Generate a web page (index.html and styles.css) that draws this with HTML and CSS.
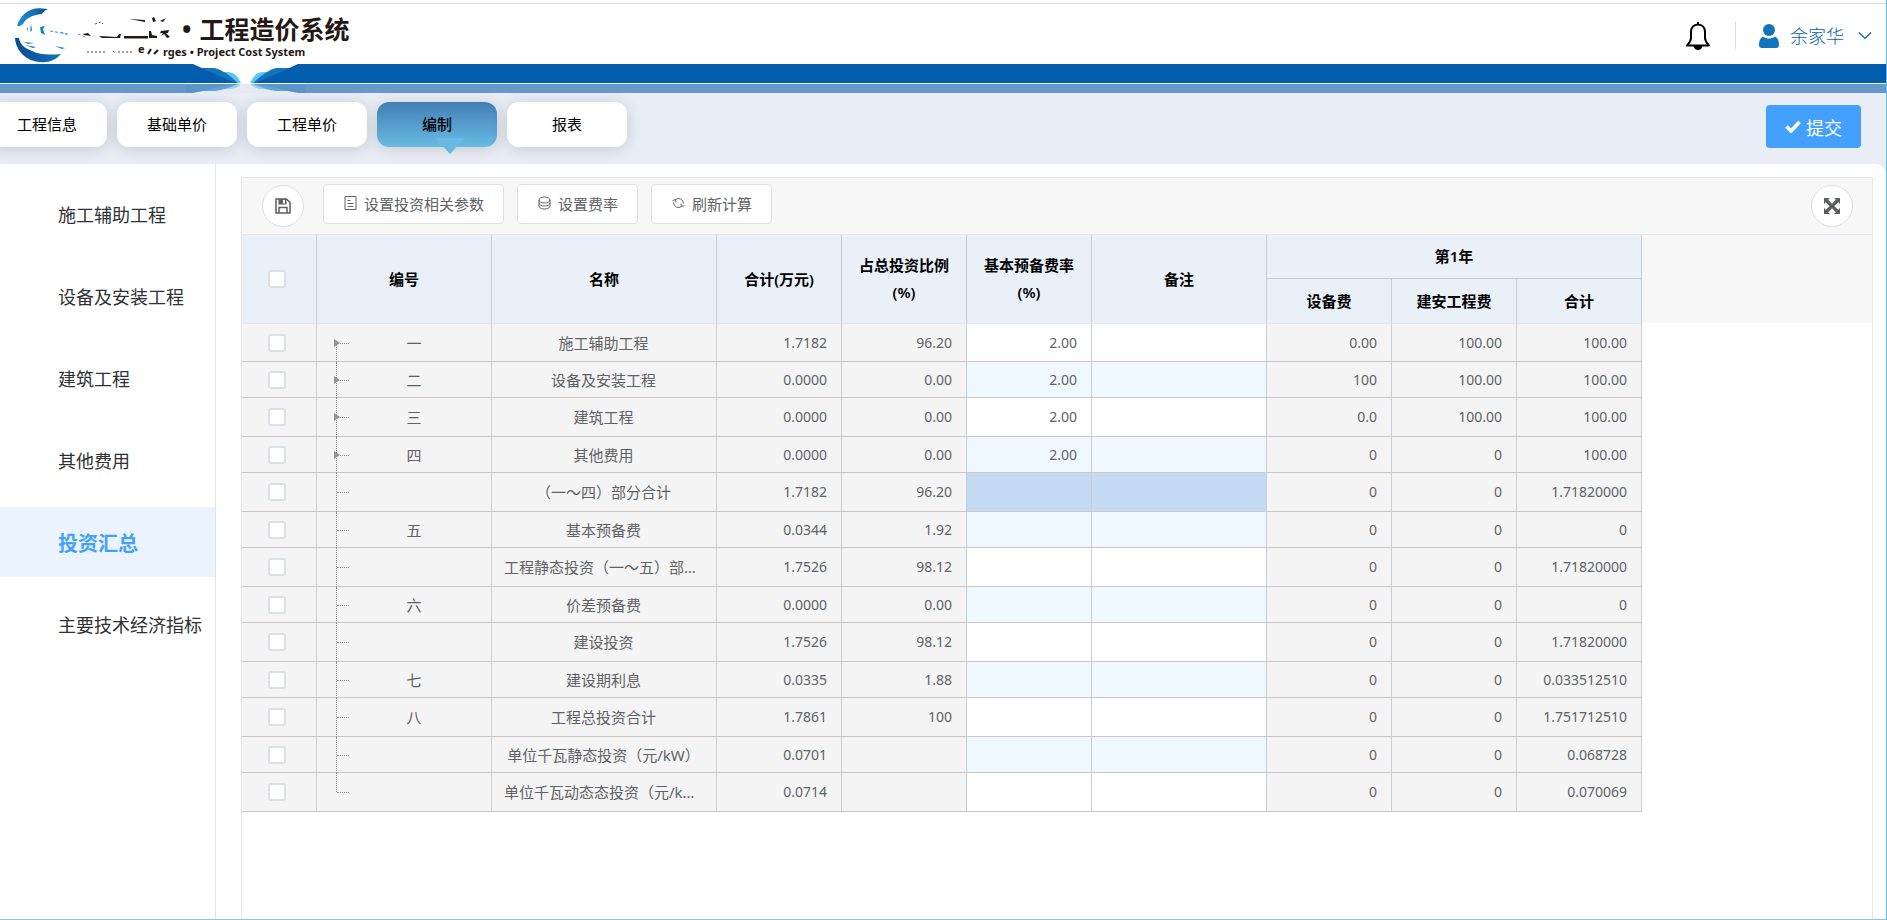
FILE: index.html
```html
<!DOCTYPE html>
<html lang="zh-CN">
<head>
<meta charset="utf-8">
<title>工程造价系统</title>
<link rel="stylesheet" href="styles.css">
</head>
<body>
<div class="app">
  <header class="header">
    <div class="brand">
      <svg class="brand-mark" width="150" height="60" viewBox="0 0 150 60" aria-hidden="true">
        <defs>
          <linearGradient id="arcTop" x1="0" y1="0" x2="1" y2="0"><stop offset="0" stop-color="#1b94d2"/><stop offset="1" stop-color="#0a4f96"/></linearGradient>
          <linearGradient id="arcLow" x1="0" y1="0" x2="1" y2="0"><stop offset="0" stop-color="#0a4a90"/><stop offset="1" stop-color="#1173bb"/></linearGradient>
        </defs>
        <path fill="url(#arcTop)" d="M5 22C8 11 18 3 30 4.500L36 5C33 6 31 8 30 10C20 11 14 14 11 20L8 22Z"/>
        <path fill="url(#arcLow)" d="M3 34L7 34C8 40 12 44 20 47C28 51 38 51 49 50C44 56 36 59 28 58C14 57 4 47 3 34Z"/>
        <path fill="#1680c4" d="M28 23L33 22L31 25L33 31L29 29ZM19 20L20 26L18 28ZM15 24L16 23L16 28ZM12 38L22 39L16 40ZM13 41L24 43L21 44ZM43 42L53 44L50 45Z"/>
        <path fill="none" stroke="#3b96c9" stroke-dasharray="3 2" d="M38 27L56 30M49 28L55 31M66 30L73 33"/>
        <path fill="#231815" d="M71 30L76 29L79 32L72 31ZM87 32L105 33L107 30L109 30L108 34L90 34ZM112 32H136V34.500H112ZM117 15L133 16V18ZM137 27L139 27L140 31L145 32V34H137ZM149 27L157 26L156 29L154 29L158 33L155 34L152 30L149 32L151 29H148ZM140 14L142 13L144 17L141 18ZM148 17L154 14L151 18Z"/>
        <path fill="none" stroke="#4a4644" stroke-dasharray="2 2" d="M83 20L89 18L91 20M75 48H95M101 47L103 49M106 48H121"/>
        <path fill="none" stroke="#231815" stroke-width="2" d="M136 50L139 45M142 50L146 46"/>
        <text class="brand-rest" x="126" y="49">e</text>
      </svg>
      <div class="brand-text">
        <div class="brand-title"><span class="brand-dot">•</span>工程造价系统</div>
        <div class="brand-sub">rges • Project Cost System</div>
      </div>
    </div>
    <div class="account">
      <button class="icon-button" aria-label="消息">
        <svg width="26" height="30" viewBox="0 0 26 30"><path fill="none" stroke="#000" stroke-width="2" stroke-linejoin="round" d="M13 3.500C8.500 3.500 6 7 6 11V17C6 20 4 22 2 24.500H24C22 22 20 20 20 17V11C20 7 17.500 3.500 13 3.500Z"/><path d="M12 1h2v3h-2zM8.500 25h9c-.5 2.500-2.300 4-4.500 4s-4-1.500-4.500-4z"/></svg>
      </button>
      <span class="divider"></span>
      <button class="user">
        <svg width="22" height="24" viewBox="0 0 22 24" aria-hidden="true"><circle cx="11" cy="6" r="6" fill="#1374bb"/><path fill="#1374bb" d="M5 12.500C7 14 9 14.500 11 14.500S15 14 17 12.500C20 14 21 17 21 21C21 23 20 24 18 24H4C2 24 1 23 1 21C1 17 2 14 5 12.500Z"/></svg>
        <span>余家华</span>
        <svg width="14" height="10" viewBox="0 0 14 10" aria-hidden="true"><path d="M1 1.500L7 7.500L13 1.500" fill="none" stroke="#0a5cad" stroke-width="1.200"/></svg>
      </button>
    </div>
  </header>

  <div class="ribbon">
    <svg class="ribbon-notch" width="120" height="29" viewBox="0 0 120 29" aria-hidden="true">
      <defs>
        <g id="wing"><path fill="#5bc6f2" d="M34 8H42Q50 8 55 19H46Z"/><path fill="#1374bd" d="M15 4H29Q38 6 52 19H46Z"/><path fill="#035dad" d="M0 0H7L17 4.500Q28 10 50 19H0Z"/></g>
      </defs>
      <path fill="#fff" d="M0 0H120V20H0Z"/>
      <path fill="#e6ebf2" d="M0 20H120V29H0Z"/>
      <use href="#wing"/>
      <use href="#wing" transform="translate(119 0) scale(-1 1)"/>
      <path fill="#035dad" d="M118 0h2v19h-2z"/>
      <g opacity=".6"><use href="#wing" transform="translate(0 29) scale(1 -.47)"/><use href="#wing" transform="translate(119 29) scale(-1 -.47)"/><path fill="#035dad" d="M119 20h1v9h-1z"/></g>
    </svg>
  </div>

  <div class="tabbar">
    <nav class="tabs">
      <a class="tab" href="#info">工程信息</a>
      <a class="tab" href="#base">基础单价</a>
      <a class="tab" href="#unit">工程单价</a>
      <a class="tab tab-active" href="#edit">编制</a>
      <a class="tab" href="#report">报表</a>
    </nav>
    <button class="submit">
      <svg width="16" height="13" viewBox="0 0 16 13" aria-hidden="true"><path d="M1.500 6.500L6 11L14.500 2" fill="none" stroke="#fff" stroke-width="3.600"/></svg>
      提交
    </button>
  </div>

  <div class="body">
    <nav class="side">
      <a class="side-item" href="#s1">施工辅助工程</a>
      <a class="side-item" href="#s2">设备及安装工程</a>
      <a class="side-item" href="#s3">建筑工程</a>
      <a class="side-item" href="#s4">其他费用</a>
      <a class="side-item side-active" href="#s5">投资汇总</a>
      <a class="side-item" href="#s6">主要技术经济指标</a>
    </nav>

    <main class="main">
      <section class="panel">
        <div class="toolbar">
          <button class="round" aria-label="保存">
            <svg width="16" height="16" viewBox="0 0 16 16"><path fill="none" stroke="#5c5e63" stroke-width="1.500" d="M1 1H11.500L15 4.500V15H1ZM4 15V9.500H12V15"/><path fill="#5c5e63" d="M3.500 1H11.500V6.500H3.500Z"/><path fill="#fff" d="M8 2h2v3.500H8z"/></svg>
          </button>
          <button class="tool">
            <svg width="13" height="14" viewBox="0 0 13 14" aria-hidden="true"><path fill="none" stroke="#606266" d="M1 .5H12V13.500H1ZM3.500 4.500H6.500M3.500 7.500H9.500M3.500 10.500H9.500"/></svg>
            设置投资相关参数
          </button>
          <button class="tool">
            <svg width="13" height="14" viewBox="0 0 13 14" aria-hidden="true"><g fill="none" stroke="#606266"><ellipse cx="6.500" cy="4" rx="5.500" ry="3"/><path d="M1 4V10C1 11.700 3.500 13 6.500 13S12 11.700 12 10V4M1 7C1 8.700 3.500 10 6.500 10S12 8.700 12 7"/></g></svg>
            设置费率
          </button>
          <button class="tool">
            <svg width="13" height="14" viewBox="0 0 13 14" aria-hidden="true"><path fill="none" stroke="#606266" d="M3.500 3.500A5 5 0 0 1 11.500 7.500M1.500 6.500A5 5 0 0 0 9.500 10.500M.5 4.500L3.500 3.500L4 6.500M12.500 9.500L9.500 10.500L9 7.500"/></svg>
            刷新计算
          </button>
          <button class="round round-end" aria-label="全屏">
            <svg width="16" height="16" viewBox="0 0 16 16"><path fill="#5c5e63" d="M0 0H6L4.200 1.800L8 5.700L11.800 1.800L10 0H16V6L14.200 4.200L10.300 8L14.200 11.800L16 10V16H10L11.800 14.200L8 10.300L4.200 14.200L6 16H0V10L1.800 11.800L5.700 8L1.800 4.200L0 6Z"/></svg>
          </button>
        </div>

        <table class="grid">
          <colgroup>
            <col class="w-check"><col class="w-wide"><col class="w-name"><col class="w-num"><col class="w-num"><col class="w-num"><col class="w-wide"><col class="w-num"><col class="w-num"><col class="w-num"><col>
          </colgroup>
          <thead>
            <tr>
              <th rowspan="2" class="pick"><input class="check" type="checkbox" aria-label="全选"></th>
              <th rowspan="2">编号</th>
              <th rowspan="2">名称</th>
              <th rowspan="2">合计(万元)</th>
              <th rowspan="2">占总投资比例(%)</th>
              <th rowspan="2">基本预备费率(%)</th>
              <th rowspan="2">备注</th>
              <th colspan="3" class="group">第1年</th>
              <th rowspan="2" class="filler"></th>
            </tr>
            <tr><th>设备费</th><th>建安工程费</th><th>合计</th></tr>
          </thead>
          <tbody id="rows"></tbody>
        </table>
      </section>
    </main>
  </div>
</div>
<script src="rows.js"></script>
</body>
</html>
```
FILE: rows.js
```js
const rows = [
  ['一', '施工辅助工程', '1.7182', '96.20', '2.00', '0.00', '100.00', '100.00'],
  ['二', '设备及安装工程', '0.0000', '0.00', '2.00', '100', '100.00', '100.00'],
  ['三', '建筑工程', '0.0000', '0.00', '2.00', '0.0', '100.00', '100.00'],
  ['四', '其他费用', '0.0000', '0.00', '2.00', '0', '0', '100.00'],
  ['', '（一～四）部分合计', '1.7182', '96.20', '', '0', '0', '1.71820000'],
  ['五', '基本预备费', '0.0344', '1.92', '', '0', '0', '0'],
  ['', '工程静态投资（一～五）部分合计', '1.7526', '98.12', '', '0', '0', '1.71820000'],
  ['六', '价差预备费', '0.0000', '0.00', '', '0', '0', '0'],
  ['', '建设投资', '1.7526', '98.12', '', '0', '0', '1.71820000'],
  ['七', '建设期利息', '0.0335', '1.88', '', '0', '0', '0.033512510'],
  ['八', '工程总投资合计', '1.7861', '100', '', '0', '0', '1.751712510'],
  ['', '单位千瓦静态投资（元/kW）', '0.0701', '', '', '0', '0', '0.068728'],
  ['', '单位千瓦动态态投资（元/kW）', '0.0714', '', '', '0', '0', '0.070069']
];

document.getElementById('rows').innerHTML = rows.map((r, i) => `
  <tr class="${i === 4 ? 'selected' : ''}">
    <td class="pick"><input class="check" type="checkbox" aria-label="选择 ${r[1]}"></td>
    <td class="code">${i < 4 ? `<button class="toggle" aria-label="展开 ${r[1]}"></button>` : ''}${r[0]}</td>
    <td class="name">${r[1]}</td>
    <td class="num">${r[2]}</td>
    <td class="num">${r[3]}</td>
    <td class="num edit">${r[4]}</td>
    <td class="edit"></td>
    <td class="num">${r[5]}</td>
    <td class="num">${r[6]}</td>
    <td class="num">${r[7]}</td>
    <td class="filler"></td>
  </tr>`).join('');
```
FILE: styles.css
```css
* { box-sizing: border-box; }
body {
  margin: 0;
  font-family: "Noto Sans", "Noto Sans CJK SC", sans-serif;
  font-size: 15px;
  color: #606266;
  background: #fff;
}
button { font: inherit; color: inherit; cursor: pointer; }
a { text-decoration: none; color: inherit; }
svg { display: block; flex: none; }

.app {
  display: flex;
  flex-direction: column;
  min-height: 100vh;
  border-right: 1px solid #66b9df;
  border-bottom: 1px solid #8cc5df;
  background: #e9eef6;
}

.header {
  display: flex;
  justify-content: space-between;
  align-items: center;
  height: 61px;
  margin-top: 3px;
  padding: 0 14px 0 12px;
  border-top: 1px solid #dcdcdc;
  background: #fff;
  box-shadow: 0 -3px #fff;
}
.brand { display: flex; align-items: center; }
.brand-mark { overflow: visible; }
.brand-rest { fill: #231815; font-size: 11px; font-weight: 700; }
.brand-text { display: flex; flex-direction: column; padding: 2px 0 0 1px; color: #231815; }
.brand-title {
  display: flex;
  gap: 8px;
  padding-left: 19px;
  font-family: "Noto Sans CJK SC", sans-serif;
  font-size: 25px;
  line-height: 32px;
  font-weight: 700;
}
.brand-dot { font-family: "Noto Sans", sans-serif; }
.brand-sub { font-size: 11px; line-height: 15px; font-weight: 700; }
.account { display: flex; align-items: center; padding-top: 3px; }
.icon-button { padding: 0; border: 0; background: none; }
.divider { width: 1px; height: 27px; margin: 0 22px 0 24px; background: #d8dae2; }
.user { display: flex; align-items: center; padding: 0; border: 0; background: none; font-size: 18px; line-height: 26px; color: #0a5cad; font-weight: 300; }
.user span { margin: 0 14px 0 10px; }

.ribbon {
  height: 29px;
  padding-left: 186px;
  background: linear-gradient(#035dad 19px, #e6f0f8 19px, #e6f0f8 20px, #6699ca 20px);
}

.tabbar {
  display: flex;
  justify-content: space-between;
  align-items: flex-start;
  height: 71px;
  padding: 9px 25px 0 0;
}
.tabs { display: flex; gap: 10px; margin-left: -13px; }
.tab {
  position: relative;
  width: 120px;
  height: 45px;
  line-height: 44px;
  text-align: center;
  color: #000;
  border-radius: 12px;
  background: #fff;
  box-shadow: 0 2px 16px rgba(0, 0, 0, .16);
}
.tab-active { font-weight: 500; background: linear-gradient(#437fb5, #68bae3); }
.tab-active::after {
  content: "";
  position: absolute;
  left: 58px;
  top: 36px;
  border: 15px solid transparent;
  border-top: 16px solid #68bae3;
  border-bottom: 0;
}
.submit {
  display: flex;
  align-items: center;
  justify-content: center;
  gap: 5px;
  width: 95px;
  height: 43px;
  margin-top: 3px;
  border: 0;
  border-radius: 4px;
  background: #43a0ff;
  color: #fff;
  font-size: 18px;
}

.body { display: flex; flex: 1; background: #fff; border-top-right-radius: 10px; }
.side {
  display: flex;
  flex-direction: column;
  gap: 12px;
  flex: none;
  width: 216px;
  padding-top: 15px;
  border-right: 1px solid #e4e4e4;
}
.side-item { height: 70px; padding-left: 58px; line-height: 72px; font-size: 18px; color: #303133; white-space: nowrap; }
.side-active { font-size: 20px; line-height: 74px; font-weight: 700; color: #43a0ff; background: #ebf3ff; }

.main { display: flex; flex: 1; min-width: 0; padding: 13px 13px 0 25px; }
.panel { flex: 1; min-width: 0; border: 1px solid #e6e6e6; border-bottom: 0; }
.toolbar {
  display: flex;
  align-items: flex-start;
  gap: 13px;
  height: 57px;
  padding: 6px 19px 0 20px;
  border-bottom: 1px solid #e4e6ea;
  background: #f7f7f7;
}
.round {
  display: flex;
  align-items: center;
  justify-content: center;
  width: 42px;
  height: 42px;
  margin: 1px 6px 0 0;
  padding: 0;
  border: 1px solid #dcdfe6;
  border-radius: 50%;
  background: #fff;
}
.round-end { margin: 1px 0 0 auto; }
.tool {
  display: flex;
  align-items: center;
  gap: 7px;
  height: 40px;
  padding: 0 19px 2px 20px;
  border: 1px solid #dcdfe6;
  border-radius: 4px;
  background: #fff;
  white-space: nowrap;
}

.grid { width: 100%; table-layout: fixed; border-collapse: separate; border-spacing: 0; }
.w-check { width: 75px; }
.w-wide { width: 175px; }
.w-name { width: 225px; }
.w-num { width: 125px; }
.grid th {
  height: 44px;
  padding: 0 10px;
  border-right: 1px solid #c9ced4;
  background: #e9f0f8;
  color: #000;
  font-weight: 600;
  line-height: 27px;
}
.grid .group { border-bottom: 1px solid #c9c9c9; }
.grid .filler { background: #f7f7f7; border: 0; }
.grid td {
  position: relative;
  height: 39px;
  padding: 0 12px;
  border-right: 1px solid #c9ced4;
  border-bottom: 1px solid #cbc5c7;
  background: #f4f4f4;
  text-align: center;
  line-height: 24px;
}
.grid tr:nth-child(even) td { height: 36px; }
.grid tbody tr:first-child td { border-top: 1px solid #e4e8ee; }
.grid td.name { padding-right: 13px; overflow: hidden; white-space: nowrap; text-overflow: ellipsis; }
.grid td.num { padding-right: 14px; text-align: right; font-size: 14px; }
.grid td.edit { background: #fff; }
.grid tr:nth-child(even) td.edit { background: #eff7ff; }
.grid tr.selected td.edit { background: #c3daf2; }
.grid tbody tr td.filler { border: 0; background: #fff; }
.grid .pick { padding: 0 16px 0 12px; }

.check {
  appearance: none;
  display: block;
  width: 18px;
  height: 18px;
  margin: 0 auto;
  border: 2px solid #dcdfe6;
  border-radius: 3px;
  background: #fff;
}

.grid td.code { padding-left: 32px; }
.code::before {
  content: "";
  position: absolute;
  left: 19px;
  top: 0;
  bottom: -1px;
  border-left: 1px dotted #909399;
}
.code::after {
  content: "";
  position: absolute;
  left: 20px;
  top: 50%;
  width: 12px;
  border-top: 1px dotted #909399;
}
tr:first-child .code::before { top: 50%; }
tr:last-child .code::before { bottom: 50%; }
.toggle {
  position: absolute;
  left: 17px;
  top: calc(50% - 4px);
  padding: 0;
  border: 4px solid transparent;
  border-left: 6px solid #909399;
  border-right: 0;
  background: none;
}
```
